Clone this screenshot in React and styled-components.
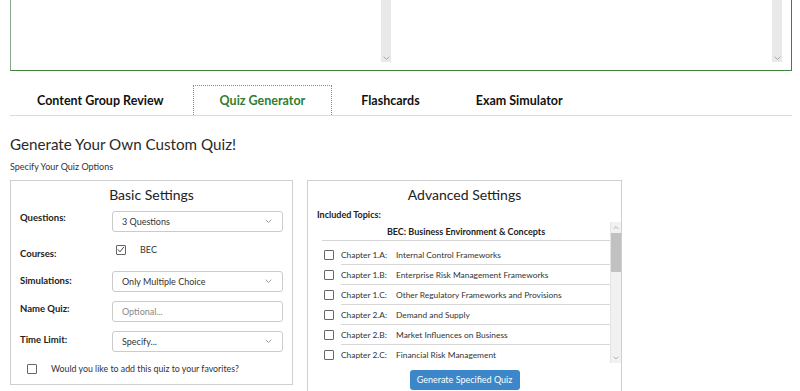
import React from "react";
import styled, { createGlobalStyle } from "styled-components";

const Global = createGlobalStyle`
  html, body { margin: 0; padding: 0; background: #fff; }
  body { font-family: Lato, "Noto Sans", sans-serif; color: #333; }
  * { box-sizing: border-box; }
`;

const Page = styled.div`
  width: 800px;
  height: 391px;
  overflow: hidden;
  padding: 0 8px 0 10px;
`;

const EditorBox = styled.div`
  height: 71px;
  border: 1px solid #3f8240;
  border-top: none;
  border-left-color: #8aa58a;
  display: grid;
  grid-template-columns: 380px 390px;
  column-gap: 1px;
  padding: 0 9px 8px 0;
`;

const TextPane = styled.div`
  display: flex;
  justify-content: flex-end;
`;

const PaneBar = styled.div`
  width: 10px;
  height: 100%;
  background: #e9e9e9;
  display: flex;
  align-items: flex-end;
  justify-content: center;
  padding-bottom: 2px;
`;

const Chevron = ({ up, size = 7, color = "#888" }) => (
  <svg width={size} height={size * 0.6} viewBox="0 0 10 6">
    <path
      d={up ? "M1 5 L5 1 L9 5" : "M1 1 L5 5 L9 1"}
      fill="none"
      stroke={color}
      strokeWidth="1.2"
    />
  </svg>
);

const TabBar = styled.div`
  margin-top: 14px;
  display: flex;
  align-items: flex-start;
  gap: 2px;
  border-bottom: 1px solid #dcdcdc;
  height: 31px;
`;

const Tab = styled.div`
  height: 30px;
  padding: 0 26px;
  display: flex;
  align-items: center;
  font-size: 12.5px;
  font-weight: 700;
  color: ${(p) => (p.$active ? "#2f7d32" : "#111")};
  border: 1px dotted ${(p) => (p.$active ? "#8a8a8a" : "transparent")};
  border-bottom: none;
  background: #fff;
`;

const Heading = styled.h1`
  margin: 18px 0 0;
  font-size: 15.2px;
  line-height: 20px;
  font-weight: 400;
  color: #2a2a2a;
`;

const SubHeading = styled.div`
  margin-top: 7px;
  font-size: 9px;
  line-height: 12px;
  color: #333;
`;

const Panels = styled.div`
  margin-top: 7px;
  display: flex;
  gap: 14px;
  align-items: flex-start;
`;

const Panel = styled.section`
  width: ${(p) => p.$w}px;
  border: 1px solid #cfcfcf;
  padding: 5px 9px 10px 9px;
  display: flex;
  flex-direction: column;
`;

const PanelTitle = styled.div`
  text-align: center;
  font-size: 14px;
  line-height: 18px;
  color: #222;
`;

const FormGrid = styled.div`
  margin-top: 7px;
  display: grid;
  grid-template-columns: 92px 1fr;
  row-gap: 9px;
  align-items: center;
`;

const Label = styled.div`
  font-size: 9.5px;
  font-weight: 700;
  color: #222;
  position: relative;
  top: ${(p) => p.$shift || 0}px;
`;

const Field = styled.div`
  height: 21px;
  border: 1px solid #cbcbcb;
  border-radius: 3px;
  display: flex;
  align-items: center;
  justify-content: space-between;
  padding: 0 10px 0 9px;
  font-size: 9px;
  color: ${(p) => (p.$placeholder ? "#888" : "#333")};
  background: #fff;
`;

const CheckRow = styled.div`
  height: 21px;
  display: flex;
  align-items: center;
  gap: 14px;
  padding-left: 4px;
  font-size: 9px;
  color: #333;
  position: relative;
  top: ${(p) => p.$shift || 0}px;
`;

const Box = styled.span`
  width: 10px;
  height: 10px;
  border: 1px solid #666;
  border-radius: 1px;
  display: inline-flex;
  align-items: center;
  justify-content: center;
  flex: none;
  background: #fff;
`;

const Checkbox = ({ checked }) => (
  <Box>
    {checked && (
      <svg width="8" height="7" viewBox="0 0 8 7">
        <path d="M1 3.5 L3 5.8 L7 0.8" fill="none" stroke="#444" strokeWidth="1" />
      </svg>
    )}
  </Box>
);

const FavRow = styled.div`
  margin-top: 11px;
  padding-left: 7px;
  display: flex;
  align-items: center;
  gap: 14px;
  font-size: 8.8px;
  color: #333;
`;

const SmallLabel = styled.div`
  margin-top: 5px;
  font-size: 9px;
  font-weight: 700;
  color: #222;
`;

const ListWrap = styled.div`
  margin: 2px -9px 0 5px;
  height: 141px;
  display: flex;
`;

const ListBody = styled.div`
  flex: 1;
  overflow: hidden;
`;

const ListHeader = styled.div`
  height: 19px;
  padding-top: 4px;
  border-bottom: 1px solid #d5d5d5;
  text-align: center;
  font-size: 9px;
  font-weight: 700;
  color: #222;
  margin-bottom: 4px;
`;

const TopicRow = styled.div`
  display: flex;
  align-items: center;
  height: 20px;
  padding-left: 2px;
`;

const TopicText = styled.div`
  margin-left: 7px;
  flex: 1;
  height: 20px;
  display: flex;
  align-items: center;
  border-bottom: 1px solid ${(p) => (p.$last ? "transparent" : "#d8d8d8")};
  font-size: 8.4px;
  color: #333;
`;

const ChapterNo = styled.span`
  width: 55px;
  flex: none;
`;

const ScrollBar = styled.div`
  width: 11px;
  background: #f1f1f1;
  display: flex;
  flex-direction: column;
  align-items: center;
  border-left: 1px solid #e4e4e4;
`;

const ArrowCell = styled.div`
  height: 11px;
  display: flex;
  align-items: center;
  justify-content: center;
`;

const Thumb = styled.div`
  width: 100%;
  height: 39px;
  background: #c1c1c1;
`;

const Spacer = styled.div`
  flex: 1;
`;

const Button = styled.button`
  align-self: center;
  margin-top: 7px;
  width: 110px;
  height: 20px;
  border: none;
  border-radius: 3px;
  background: #3b87c9;
  color: #fff;
  font-family: Lato, sans-serif;
  font-size: 9px;
  line-height: 20px;
  padding: 0;
`;

const topics = [
  ["Chapter 1.A:", "Internal Control Frameworks"],
  ["Chapter 1.B:", "Enterprise Risk Management Frameworks"],
  ["Chapter 1.C:", "Other Regulatory Frameworks and Provisions"],
  ["Chapter 2.A:", "Demand and Supply"],
  ["Chapter 2.B:", "Market Influences on Business"],
  ["Chapter 2.C:", "Financial Risk Management"],
];

export default function App() {
  return (
    <Page>
      <Global />
      <EditorBox>
        <TextPane>
          <PaneBar>
            <Chevron color="#999" />
          </PaneBar>
        </TextPane>
        <TextPane>
          <PaneBar>
            <Chevron color="#999" />
          </PaneBar>
        </TextPane>
      </EditorBox>

      <TabBar>
        <Tab>Content Group Review</Tab>
        <Tab $active>Quiz Generator</Tab>
        <Tab>Flashcards</Tab>
        <Tab>Exam Simulator</Tab>
      </TabBar>

      <Heading>Generate Your Own Custom Quiz!</Heading>
      <SubHeading>Specify Your Quiz Options</SubHeading>

      <Panels>
        <Panel $w={283}>
          <PanelTitle>Basic Settings</PanelTitle>
          <FormGrid>
            <Label $shift={-4}>Questions:</Label>
            <Field>
              3 Questions <Chevron />
            </Field>
            <Label $shift={2}>Courses:</Label>
            <CheckRow $shift={-2}>
              <Checkbox checked />
              BEC
            </CheckRow>
            <Label $shift={-1}>Simulations:</Label>
            <Field>
              Only Multiple Choice <Chevron />
            </Field>
            <Label $shift={-3}>Name Quiz:</Label>
            <Field $placeholder>Optional...</Field>
            <Label $shift={-2}>Time Limit:</Label>
            <Field>
              Specify... <Chevron />
            </Field>
          </FormGrid>
          <FavRow>
            <Checkbox />
            Would you like to add this quiz to your favorites?
          </FavRow>
        </Panel>

        <Panel $w={315}>
          <PanelTitle>Advanced Settings</PanelTitle>
          <SmallLabel>Included Topics:</SmallLabel>
          <ListWrap>
            <ListBody>
              <ListHeader>BEC: Business Environment &amp; Concepts</ListHeader>
              {topics.map(([c, t], i) => (
                <TopicRow key={c}>
                  <Checkbox />
                  <TopicText $last={i === topics.length - 1}>
                    <ChapterNo>{c}</ChapterNo>
                    {t}
                  </TopicText>
                </TopicRow>
              ))}
            </ListBody>
            <ScrollBar>
              <ArrowCell>
                <Chevron up size={6} color="#999" />
              </ArrowCell>
              <Thumb />
              <Spacer />
              <ArrowCell>
                <Chevron size={6} color="#999" />
              </ArrowCell>
            </ScrollBar>
          </ListWrap>
          <Button>Generate Specified Quiz</Button>
        </Panel>
      </Panels>
    </Page>
  );
}
